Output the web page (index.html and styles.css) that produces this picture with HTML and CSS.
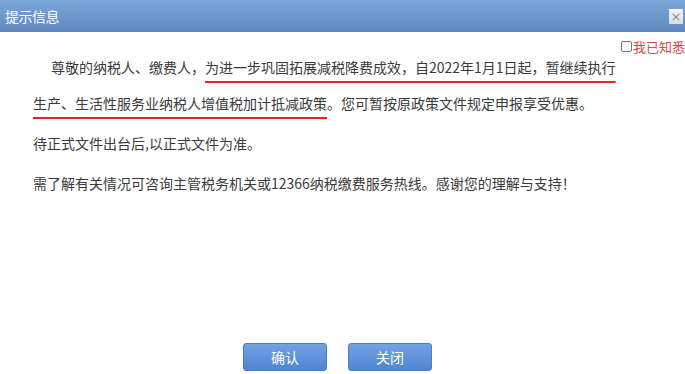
FILE: index.html
```html
<!DOCTYPE html>
<html lang="zh-CN">
<head>
    <meta charset="UTF-8">
    <title>提示信息</title>
    <link rel="stylesheet" href="styles.css">
</head>
<body>
    <div class="dialog">
        <div class="title-bar">
            <span class="title">提示信息</span>
            <span class="close-btn">×</span>
        </div>

        <div class="content">
            <label class="ack"><span class="ack-box"></span>我已知悉</label>

            <p class="notice first">尊敬的纳税人、缴费人，<span class="mark">为进一步巩固拓展减税降费成效，自2022年1月1日起，暂继续执行生产、生活性服务业纳税人增值税加计抵减政策</span>。您可暂按原政策文件规定申报享受优惠。</p>
            <p class="notice">待正式文件出台后,以正式文件为准。</p>
            <p class="notice">需了解有关情况可咨询主管税务机关或12366纳税缴费服务热线。感谢您的理解与支持！</p>
        </div>

        <!-- dialog buttons -->
        <div class="button-bar">
            <button class="btn">确认</button>
            <button class="btn">关闭</button>
        </div>
    </div>
</body>
</html>
```

FILE: styles.css
```css
* {
    padding: 0;
    margin: 0;
    box-sizing: border-box;
}

body {
    background-color: #ffffff;
    color: #333333;
    font-family: "Noto Sans CJK SC", "Noto Sans", sans-serif;
    font-size: 14px;
    overflow: hidden;
}

.dialog {
    display: flex;
    flex-direction: column;
    width: 685px;
    height: 374px;
}

.title-bar {
    display: flex;
    justify-content: space-between;
    align-items: center;
    height: 32px;
    padding: 0 2px 0 5px;
    background: linear-gradient(to bottom, #7aa8d9, #6088bb);
}

.title {
    color: #ffffff;
    font-size: 14px;
    letter-spacing: -0.5px;
}

.close-btn {
    display: flex;
    justify-content: center;
    align-items: center;
    width: 14px;
    height: 15px;
    background: linear-gradient(to bottom, #f4f6f8, #d8dde3);
    color: #8a8f96;
    font-family: "DejaVu Sans", sans-serif;
    font-size: 13px;
    line-height: 1;
}

.content {
    flex: 1;
    padding: 7px 60px 0 33px;
}

/* checkbox sits at the top right, clipped by the window edge */
.ack {
    display: flex;
    align-items: center;
    margin-left: 588px;
    width: 80px;
    height: 15px;
    color: #e0454b;
    font-size: 13px;
    white-space: nowrap;
}

.ack-box {
    width: 11px;
    height: 11px;
    margin-right: 1px;
    border: 1px solid #777777;
    border-radius: 2px;
    background-color: #ffffff;
}

.notice {
    line-height: 36px;
    margin-bottom: 4px;
    color: #3a3a3a;
}

.notice.first {
    text-indent: 18px;
    margin-top: -5px;
}

.mark {
    text-decoration: underline;
    text-decoration-color: #e8252d;
    text-decoration-thickness: 1.5px;
    text-underline-offset: 8px;
}

.button-bar {
    display: flex;
    justify-content: center;
    gap: 21px;
    padding: 0 10px 3px 0;
}

.btn {
    width: 84px;
    height: 28px;
    border: 1px solid #4c7cc4;
    border-radius: 3px;
    background: linear-gradient(to bottom, #72a2e4, #5185d2);
    color: #ffffff;
    font-family: "Noto Sans CJK SC", sans-serif;
    font-size: 14px;
}
```
